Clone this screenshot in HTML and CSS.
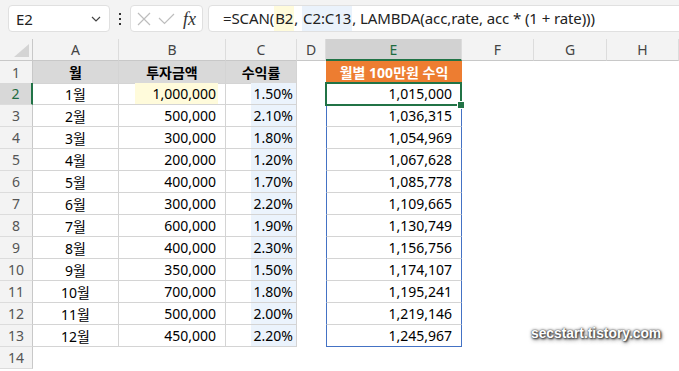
FILE: index.html
```html
<!DOCTYPE html>
<html lang="ko">

<head>
    <meta charset="UTF-8">
    <meta name="viewport" content="width=device-width, initial-scale=1.0">
    <title>SCAN 수익 계산</title>
    <link rel="stylesheet" href="styles.css">
</head>

<body>
    <div class="toolbar">
        <div class="name-box">
            <span>E2</span>
            <svg class="chevron" width="10" height="6" viewBox="0 0 10 6"><path d="M1 1 L5 5 L9 1" fill="none" stroke="#444" stroke-width="1.2"/></svg>
        </div>
        <div class="dots"><i></i><i></i><i></i></div>
        <div class="fx-box">
            <svg width="14" height="14" viewBox="0 0 14 14"><path d="M1 1 L13 13 M13 1 L1 13" stroke="#bdbdbd" stroke-width="1.2"/></svg>
            <svg width="17" height="12" viewBox="0 0 17 12"><path d="M1 5 L6.5 10.5 L16 1" fill="none" stroke="#bdbdbd" stroke-width="1.2"/></svg>
            <span class="fx">fx</span>
        </div>
        <div class="formula">=SCAN(<span class="ref-b">B2</span>, <span class="ref-c">C2:C13</span>, LAMBDA(acc,rate, acc * (1 + rate)))</div>
    </div>

    <div class="sheet">
        <div class="row head">
            <div class="corner"><svg width="15" height="13" viewBox="0 0 15 13"><polygon points="15,0 15,13 0,13" fill="#d4d4d4"/></svg></div>
            <div class="ch">A</div>
            <div class="ch">B</div>
            <div class="ch">C</div>
            <div class="ch">D</div>
            <div class="ch active">E</div>
            <div class="ch">F</div>
            <div class="ch">G</div>
            <div class="ch">H</div>
        </div>

        <div class="row">
            <div class="rh">1</div>
            <div class="c t title">월</div>
            <div class="c t title">투자금액</div>
            <div class="c t title">수익률</div>
            <div class="c"></div>
            <div class="c e-title">월별 100만원 수익</div>
            <div class="c"></div><div class="c"></div><div class="c"></div>
        </div>
        <div class="row">
            <div class="rh active">2</div>
            <div class="c t mid">1월</div>
            <div class="c t num b2">1,000,000</div>
            <div class="c t pct">1.50%</div>
            <div class="c"></div>
            <div class="c e num sel">1,015,000</div>
            <div class="c"></div><div class="c"></div><div class="c"></div>
        </div>
        <div class="row">
            <div class="rh">3</div>
            <div class="c t mid">2월</div>
            <div class="c t num">500,000</div>
            <div class="c t pct">2.10%</div>
            <div class="c"></div>
            <div class="c e num">1,036,315</div>
            <div class="c"></div><div class="c"></div><div class="c"></div>
        </div>
        <div class="row">
            <div class="rh">4</div>
            <div class="c t mid">3월</div>
            <div class="c t num">300,000</div>
            <div class="c t pct">1.80%</div>
            <div class="c"></div>
            <div class="c e num">1,054,969</div>
            <div class="c"></div><div class="c"></div><div class="c"></div>
        </div>
        <div class="row">
            <div class="rh">5</div>
            <div class="c t mid">4월</div>
            <div class="c t num">200,000</div>
            <div class="c t pct">1.20%</div>
            <div class="c"></div>
            <div class="c e num">1,067,628</div>
            <div class="c"></div><div class="c"></div><div class="c"></div>
        </div>
        <div class="row">
            <div class="rh">6</div>
            <div class="c t mid">5월</div>
            <div class="c t num">400,000</div>
            <div class="c t pct">1.70%</div>
            <div class="c"></div>
            <div class="c e num">1,085,778</div>
            <div class="c"></div><div class="c"></div><div class="c"></div>
        </div>
        <div class="row">
            <div class="rh">7</div>
            <div class="c t mid">6월</div>
            <div class="c t num">300,000</div>
            <div class="c t pct">2.20%</div>
            <div class="c"></div>
            <div class="c e num">1,109,665</div>
            <div class="c"></div><div class="c"></div><div class="c"></div>
        </div>
        <div class="row">
            <div class="rh">8</div>
            <div class="c t mid">7월</div>
            <div class="c t num">600,000</div>
            <div class="c t pct">1.90%</div>
            <div class="c"></div>
            <div class="c e num">1,130,749</div>
            <div class="c"></div><div class="c"></div><div class="c"></div>
        </div>
        <div class="row">
            <div class="rh">9</div>
            <div class="c t mid">8월</div>
            <div class="c t num">400,000</div>
            <div class="c t pct">2.30%</div>
            <div class="c"></div>
            <div class="c e num">1,156,756</div>
            <div class="c"></div><div class="c"></div><div class="c"></div>
        </div>
        <div class="row">
            <div class="rh">10</div>
            <div class="c t mid">9월</div>
            <div class="c t num">350,000</div>
            <div class="c t pct">1.50%</div>
            <div class="c"></div>
            <div class="c e num">1,174,107</div>
            <div class="c"></div><div class="c"></div><div class="c"></div>
        </div>
        <div class="row">
            <div class="rh">11</div>
            <div class="c t mid">10월</div>
            <div class="c t num">700,000</div>
            <div class="c t pct">1.80%</div>
            <div class="c"></div>
            <div class="c e num">1,195,241</div>
            <div class="c"></div><div class="c"></div><div class="c"></div>
        </div>
        <div class="row">
            <div class="rh">12</div>
            <div class="c t mid">11월</div>
            <div class="c t num">500,000</div>
            <div class="c t pct">2.00%</div>
            <div class="c"></div>
            <div class="c e num">1,219,146</div>
            <div class="c"></div><div class="c"></div><div class="c"></div>
        </div>
        <div class="row">
            <div class="rh">13</div>
            <div class="c t mid">12월</div>
            <div class="c t num">450,000</div>
            <div class="c t pct">2.20%</div>
            <div class="c"></div>
            <div class="c e num last">1,245,967</div>
            <div class="c"></div><div class="c"></div><div class="c"></div>
        </div>
        <div class="row">
            <div class="rh">14</div>
            <div class="c"></div><div class="c"></div><div class="c"></div><div class="c"></div>
            <div class="c"></div><div class="c"></div><div class="c"></div><div class="c"></div>
        </div>

        <div class="watermark">secstart.tistory.com</div>
    </div>
</body>

</html>
```

FILE: styles.css
```css
body {
    margin: 0;
    background-color: #ffffff;
    font-family: "Noto Sans", "Noto Sans CJK KR", sans-serif;
    font-size: 14px;
    color: #000;
    overflow: hidden;
}

/* 상단 이름 상자 + 수식 입력줄 */
.toolbar {
    display: flex;
    align-items: center;
    height: 39px;
    padding-left: 8px;
    background-color: #f3f3f3;
    box-sizing: border-box;
    padding-bottom: 2px;
    gap: 0;
}

.name-box,
.fx-box,
.formula {
    height: 27px;
    box-sizing: border-box;
    background-color: #fff;
    border: 1px solid #e0e0e0;
    border-radius: 4px;
}

.name-box {
    width: 102px;
    display: flex;
    align-items: center;
    justify-content: space-between;
    padding: 0 8px 0 7px;
    font-size: 15px;
    color: #222;
}

.dots {
    width: 20px;
    display: flex;
    flex-direction: column;
    align-items: center;
    gap: 3px;
}

.dots i {
    width: 2px;
    height: 2px;
    background-color: #333;
}

.fx-box {
    width: 73px;
    display: flex;
    align-items: center;
    gap: 7px;
    padding-left: 6px;
}

.fx {
    font-family: "Liberation Serif", serif;
    font-style: italic;
    font-size: 18px;
    color: #333;
    margin-left: 1px;
    line-height: 1;
}

.formula {
    flex: 1;
    margin-left: 5px;
    margin-right: -10px;
    padding-left: 14px;
    font-size: 15px;
    line-height: 25px;
    letter-spacing: -0.1px;
    color: #222;
    white-space: nowrap;
    overflow: hidden;
}

.ref-b,
.ref-c {
    display: inline-block;
    padding: 0 1px;
}

.ref-b { background-color: #fffbdb; }
.ref-c { background-color: #eaf2fb; }

/* 시트 */
.sheet {
    position: relative;
}

.row {
    display: grid;
    grid-template-columns: 33px 86px 107px 71px 29px 136px 72px 73px 72px;
    height: 22px;
}

.row > div {
    box-sizing: border-box;
    display: flex;
    align-items: center;
    white-space: nowrap;
}

.corner,
.ch {
    background-color: #f3f3f3;
    border-bottom: 1px solid #c8c8c8;
}

.corner {
    border-right: 1px solid #c8c8c8;
    justify-content: flex-end;
    align-items: flex-end !important;
    padding: 0 3px 3px 0;
}

.ch {
    justify-content: center;
    border-right: 1px solid #dcdcdc;
    color: #444;
}

.ch.active {
    background-color: #d2d2d2;
    color: #1e6b41;
    border-bottom: 2px solid #217346;
}

.rh {
    justify-content: center;
    background-color: #f3f3f3;
    border-right: 1px solid #c8c8c8;
    border-bottom: 1px solid #dcdcdc;
    color: #555;
}

.rh.active {
    background-color: #d8d8d8;
    color: #1e6b41;
    border-right: 2px solid #217346;
}

/* 표 테두리 A1:C13 */
.t {
    border-right: 1px solid #d4d4d4;
    border-bottom: 1px solid #d4d4d4;
}

.title {
    background-color: #d9d9d9;
    font-weight: bold;
    justify-content: center;
}

.mid { justify-content: center; }

.num {
    justify-content: flex-end;
    padding-right: 9px;
}

.pct {
    justify-content: flex-end;
    padding-right: 3px;
    background: linear-gradient(to right, transparent 25px, #ebf3fc 25px);
}

.b2 {
    background: linear-gradient(to right, transparent 16px, #fffbdb 16px, #fffbdb 99px, transparent 99px);
}

.e-title {
    justify-content: center;
    background-color: #ed7d31;
    color: #fff;
    font-weight: bold;
    border-bottom: 2px solid #fff;
    padding-top: 1px;
}

.e {
    border-left: 1px solid #4472c4;
    border-right: 1px solid #4472c4;
    border-bottom: 1px solid #d4d4d4;
}

.e.last {
    border-bottom: 1px solid #4472c4;
}

.sel {
    position: relative;
}

.sel::after {
    content: "";
    position: absolute;
    left: -2px;
    top: -1px;
    right: -1px;
    bottom: -2px;
    border: 2px solid #217346;
}

.sel::before {
    content: "";
    position: absolute;
    right: -4px;
    bottom: -5px;
    width: 6px;
    height: 6px;
    background-color: #217346;
    border: 1px solid #fff;
    z-index: 1;
}

.watermark {
    position: absolute;
    left: 531px;
    top: 287px;
    font-family: "Liberation Sans", Arial, sans-serif;
    font-weight: bold;
    font-size: 13.8px;
    color: #fff;
    text-shadow: 0 0 1px #555, 1px 1px 2px #333, 0 0 3px #555, 1px 2px 4px #777;
}
```
